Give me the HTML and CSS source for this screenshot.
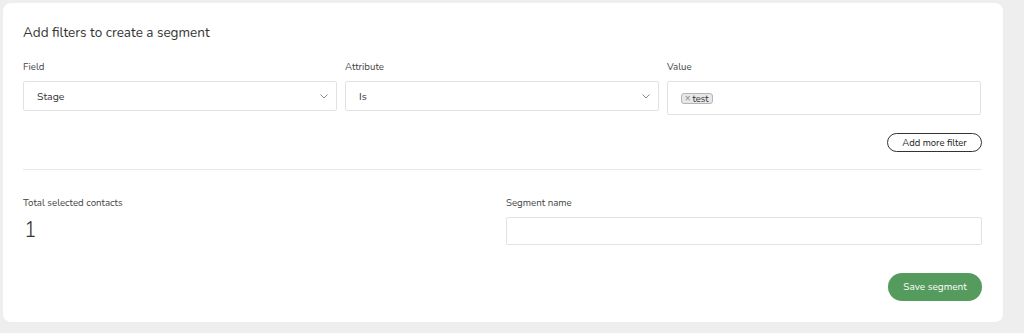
FILE: index.html
```html
<!DOCTYPE html>
<html lang="en">
<head>
<meta charset="utf-8">
<title>Segment</title>
<link rel="stylesheet" href="styles.css">
</head>
<body>
<div class="card">
  <h2 class="title">Add filters to create a segment</h2>
  <div class="filters">
    <div class="field">
      <label class="label">Field</label>
      <div class="select"><span>Stage</span>
        <svg class="chev" width="8" height="5" viewBox="0 0 8 5"><path d="M0.5 0.5 L4 4 L7.5 0.5" fill="none" stroke="#888" stroke-width="1"/></svg>
      </div>
    </div>
    <div class="field">
      <label class="label">Attribute</label>
      <div class="select"><span>Is</span>
        <svg class="chev" width="8" height="5" viewBox="0 0 8 5"><path d="M0.5 0.5 L4 4 L7.5 0.5" fill="none" stroke="#888" stroke-width="1"/></svg>
      </div>
    </div>
    <div class="field">
      <label class="label">Value</label>
      <div class="multi"><span class="tag"><span class="x">×</span>test</span></div>
    </div>
  </div>
  <div class="actions-row">
    <button class="btn-outline">Add more filter</button>
  </div>
  <hr class="divider">
  <div class="bottom">
    <div class="col">
      <div class="label">Total selected contacts</div>
      <div class="count">1</div>
    </div>
    <div class="col">
      <label class="label">Segment name</label>
      <div class="input"></div>
    </div>
  </div>
  <div class="actions-row save-row">
    <button class="btn-save">Save segment</button>
  </div>
</div>
</body>
</html>
```
FILE: styles.css
```css
* { box-sizing: border-box; }
html, body { margin: 0; padding: 0; }
body {
  background: #eeeeee;
  font-family: "Nunito", Lato, "Open Sans", sans-serif;
  color: #333;
  width: 1024px;
  height: 333px;
  overflow: hidden;
}
.card {
  margin: 3px 21px 0 3px;
  width: 1000px;
  height: 319px;
  background: #fff;
  border-radius: 8px;
  padding: 20px 21px 21px 20px;
}
.title {
  margin: 0;
  font-size: 13.5px;
  font-weight: 400;
  line-height: 20px;
  color: #333;
}
.filters {
  display: grid;
  grid-template-columns: 314px 314px 314px;
  gap: 8px;
  margin-top: 16px;
  align-items: start;
}
.label {
  display: block;
  font-size: 9.7px;
  line-height: 16px;
  color: #444;
  margin-bottom: 6px;
}
.select {
  height: 30px;
  border: 1px solid #e2e2e2;
  border-radius: 2px;
  display: flex;
  align-items: center;
  justify-content: space-between;
  padding: 0 8px 0 13px;
  font-size: 10.5px;
  color: #333;
}
.chev { display: block; }
.multi {
  height: 34px;
  border: 1px solid #e2e2e2;
  border-radius: 2px;
  display: flex;
  align-items: center;
  padding: 0 13px;
}
.tag {
  display: inline-flex;
  align-items: center;
  height: 11px;
  padding: 0 3px;
  border: 1px solid #b5b5b5;
  background: #e7e7e7;
  border-radius: 3px;
  font-size: 9.5px;
  line-height: 9px;
  color: #333;
}
.tag .x { color: #777; margin-right: 2px; font-size: 9px; }
.actions-row {
  display: flex;
  justify-content: flex-end;
  margin-top: 18px;
}
.btn-outline {
  height: 19px;
  width: 95px;
  border: 1px solid #333;
  border-radius: 10px;
  background: #fff;
  font-family: inherit;
  font-size: 9.5px;
  color: #222;
  padding: 0;
}
.divider {
  border: 0;
  border-top: 1px solid #e8e8e8;
  margin: 17px 0 0 0;
}
.bottom {
  display: grid;
  grid-template-columns: 475px 1fr;
  gap: 8px;
  margin-top: 25px;
}
.count {
  font-size: 21px;
  font-weight: 300;
  line-height: 26px;
  color: #333;
  margin-left: 1px;
}
.input {
  height: 28px;
  border: 1px solid #e2e2e2;
  border-radius: 2px;
}
.save-row { margin-top: 28px; }
.btn-save {
  height: 28px;
  width: 94px;
  border: 0;
  border-radius: 14px;
  background: #559b5e;
  color: #fff;
  font-family: inherit;
  font-size: 10px;
  padding: 0;
}
```
